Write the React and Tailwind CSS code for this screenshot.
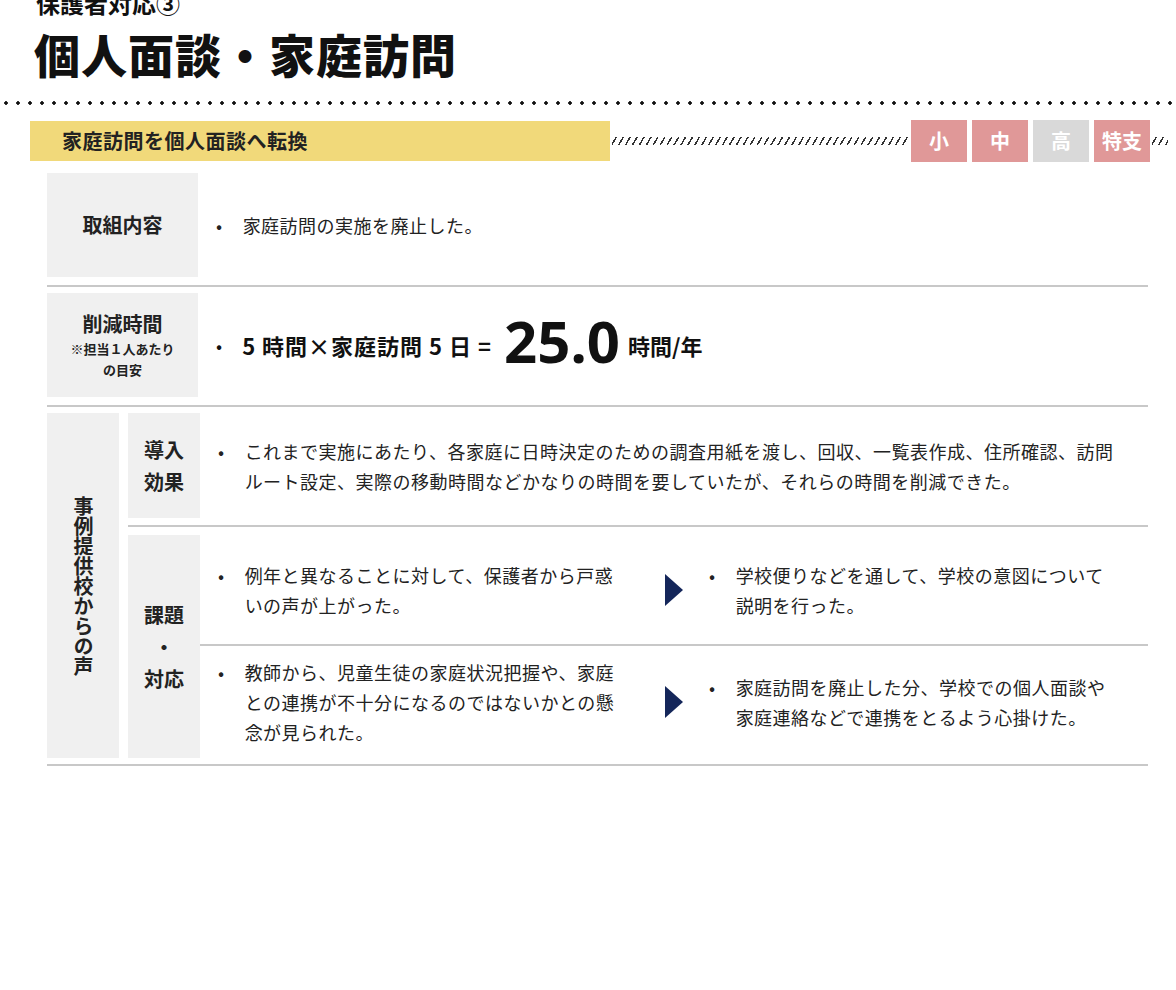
const jp = { fontFamily: '"Noto Sans CJK JP", "Noto Sans", sans-serif' };

const Tri = () => (
  <svg width="20" height="34" viewBox="0 0 20 34" className="shrink-0">
    <polygon points="1,1 19,17 1,33" fill="#14265a" />
  </svg>
);

const Bullet = ({ children, className = "", textW = "" }) => (
  <div className={"flex gap-5 text-[18px] leading-[30px] tracking-[0.5px] text-[#222] " + className}>
    <span>•</span>
    <span className={textW}>{children}</span>
  </div>
);

const Label = ({ children, className = "" }) => (
  <div className={"bg-[#f0f0f0] shrink-0 flex flex-col items-center justify-center font-bold text-[#222] " + className}>
    {children}
  </div>
);

export default function App() {
  return (
    <div className="w-[1176px] h-[990px] bg-white overflow-hidden relative" style={jp}>
      <div className="pl-[36px] -mt-[12px] text-[24px] font-bold leading-[30px] text-[#111]">保護者対応③</div>
      <div className="pl-[34px] mt-[8px] text-[46px] font-black leading-[54px] text-[#111] tracking-[1px]">個人面談・家庭訪問</div>
      <div className="mt-[20px] h-[6px] w-full bg-[radial-gradient(circle,#111_1.5px,transparent_2px)] bg-[length:12px_6px]"></div>

      <div className="mt-[14px] flex items-center h-[42px] pr-[8px]">
        <div className="ml-[30px] w-[580px] h-[40px] bg-[#f1d97a] flex items-center pl-[32px] text-[20px] font-bold text-[#222] tracking-[0.5px]">
          家庭訪問を個人面談へ転換
        </div>
        <div className="flex-1 h-[8px] mx-[2px] bg-[repeating-linear-gradient(120deg,transparent_0_3px,#333_3px_4.5px,transparent_4.5px_6px)]"></div>
        <div className="flex gap-[5px]">
          {[["小", "#e09898"], ["中", "#e09898"], ["高", "#d9d9d9"], ["特支", "#e09898"]].map(([t, c]) => (
            <div key={t} className="w-[56px] h-[42px] flex items-center justify-center text-white text-[20px] font-bold" style={{ background: c }}>{t}</div>
          ))}
        </div>
        <div className="w-[16px] h-[8px] ml-[2px] bg-[repeating-linear-gradient(120deg,transparent_0_3px,#333_3px_4.5px,transparent_4.5px_6px)]"></div>
      </div>

      <div className="ml-[47px] w-[1101px] mt-[11px]">
        <div className="flex items-stretch border-b-2 border-[#c8c8c8] pb-[8px]">
          <Label className="w-[151px] h-[104px] text-[20px]">取組内容</Label>
          <div className="flex items-center pl-[18px]"><Bullet>家庭訪問の実施を廃止した。</Bullet></div>
        </div>
        <div className="flex items-stretch border-b-2 border-[#c8c8c8] pb-[8px] pt-[6px]">
          <Label className="w-[151px] h-[104px] text-[20px] leading-[28px]">
            <span>削減時間</span>
            <span className="text-[13px] leading-[22px]">※担当１人あたり</span>
            <span className="text-[13px] leading-[20px]">の目安</span>
          </Label>
          <div className="flex items-center pl-[18px] gap-5 font-bold text-[22px] text-[#111]">
            <span className="font-normal text-[18px]">•</span>
            <span className="tracking-[1px]">5 時間×家庭訪問 5 日 =</span>
            <span className="text-[58px] leading-[60px] font-bold -mt-[8px] -ml-2" style={{ fontFamily: '"Noto Sans", sans-serif' }}>25.0</span>
            <span className="-ml-3">時間/年</span>
          </div>
        </div>
        <div className="flex pt-[6px] border-b-2 border-[#c8c8c8] pb-[6px]">
          <Label className="w-[72px] text-[20px] leading-[26px] mr-[9px]">
            <span className="[writing-mode:vertical-rl]">事例提供校からの声</span>
          </Label>
          <div className="flex-1">
            <div className="flex border-b-2 border-[#c8c8c8] pb-[7px]">
              <Label className="w-[72px] h-[105px] text-[20px] leading-[32px]"><span>導入</span><span>効果</span></Label>
              <div className="flex items-center pl-[18px]">
                <Bullet textW="w-[880px]">これまで実施にあたり、各家庭に日時決定のための調査用紙を渡し、回収、一覧表作成、住所確認、訪問ルート設定、実際の移動時間などかなりの時間を要していたが、それらの時間を削減できた。</Bullet>
              </div>
            </div>
            <div className="flex pt-[8px]">
              <Label className="w-[72px] text-[20px] leading-[32px]"><span>課題</span><span>・</span><span>対応</span></Label>
              <div className="flex-1">
                <div className="flex items-center h-[111px] border-b-2 border-[#c8c8c8]">
                  <Bullet className="pl-[18px] w-[450px]" textW="w-[385px]">例年と異なることに対して、保護者から戸惑いの声が上がった。</Bullet>
                  <div className="w-[47px] flex justify-center"><Tri /></div>
                  <Bullet className="pl-[12px] w-[420px]" textW="w-[385px]">学校便りなどを通して、学校の意図について説明を行った。</Bullet>
                </div>
                <div className="flex items-center h-[112px]">
                  <Bullet className="pl-[18px] w-[450px]" textW="w-[385px]">教師から、児童生徒の家庭状況把握や、家庭との連携が不十分になるのではないかとの懸念が見られた。</Bullet>
                  <div className="w-[47px] flex justify-center"><Tri /></div>
                  <Bullet className="pl-[12px] w-[420px]" textW="w-[385px]">家庭訪問を廃止した分、学校での個人面談や家庭連絡などで連携をとるよう心掛けた。</Bullet>
                </div>
              </div>
            </div>
          </div>
        </div>
      </div>
    </div>
  );
}
